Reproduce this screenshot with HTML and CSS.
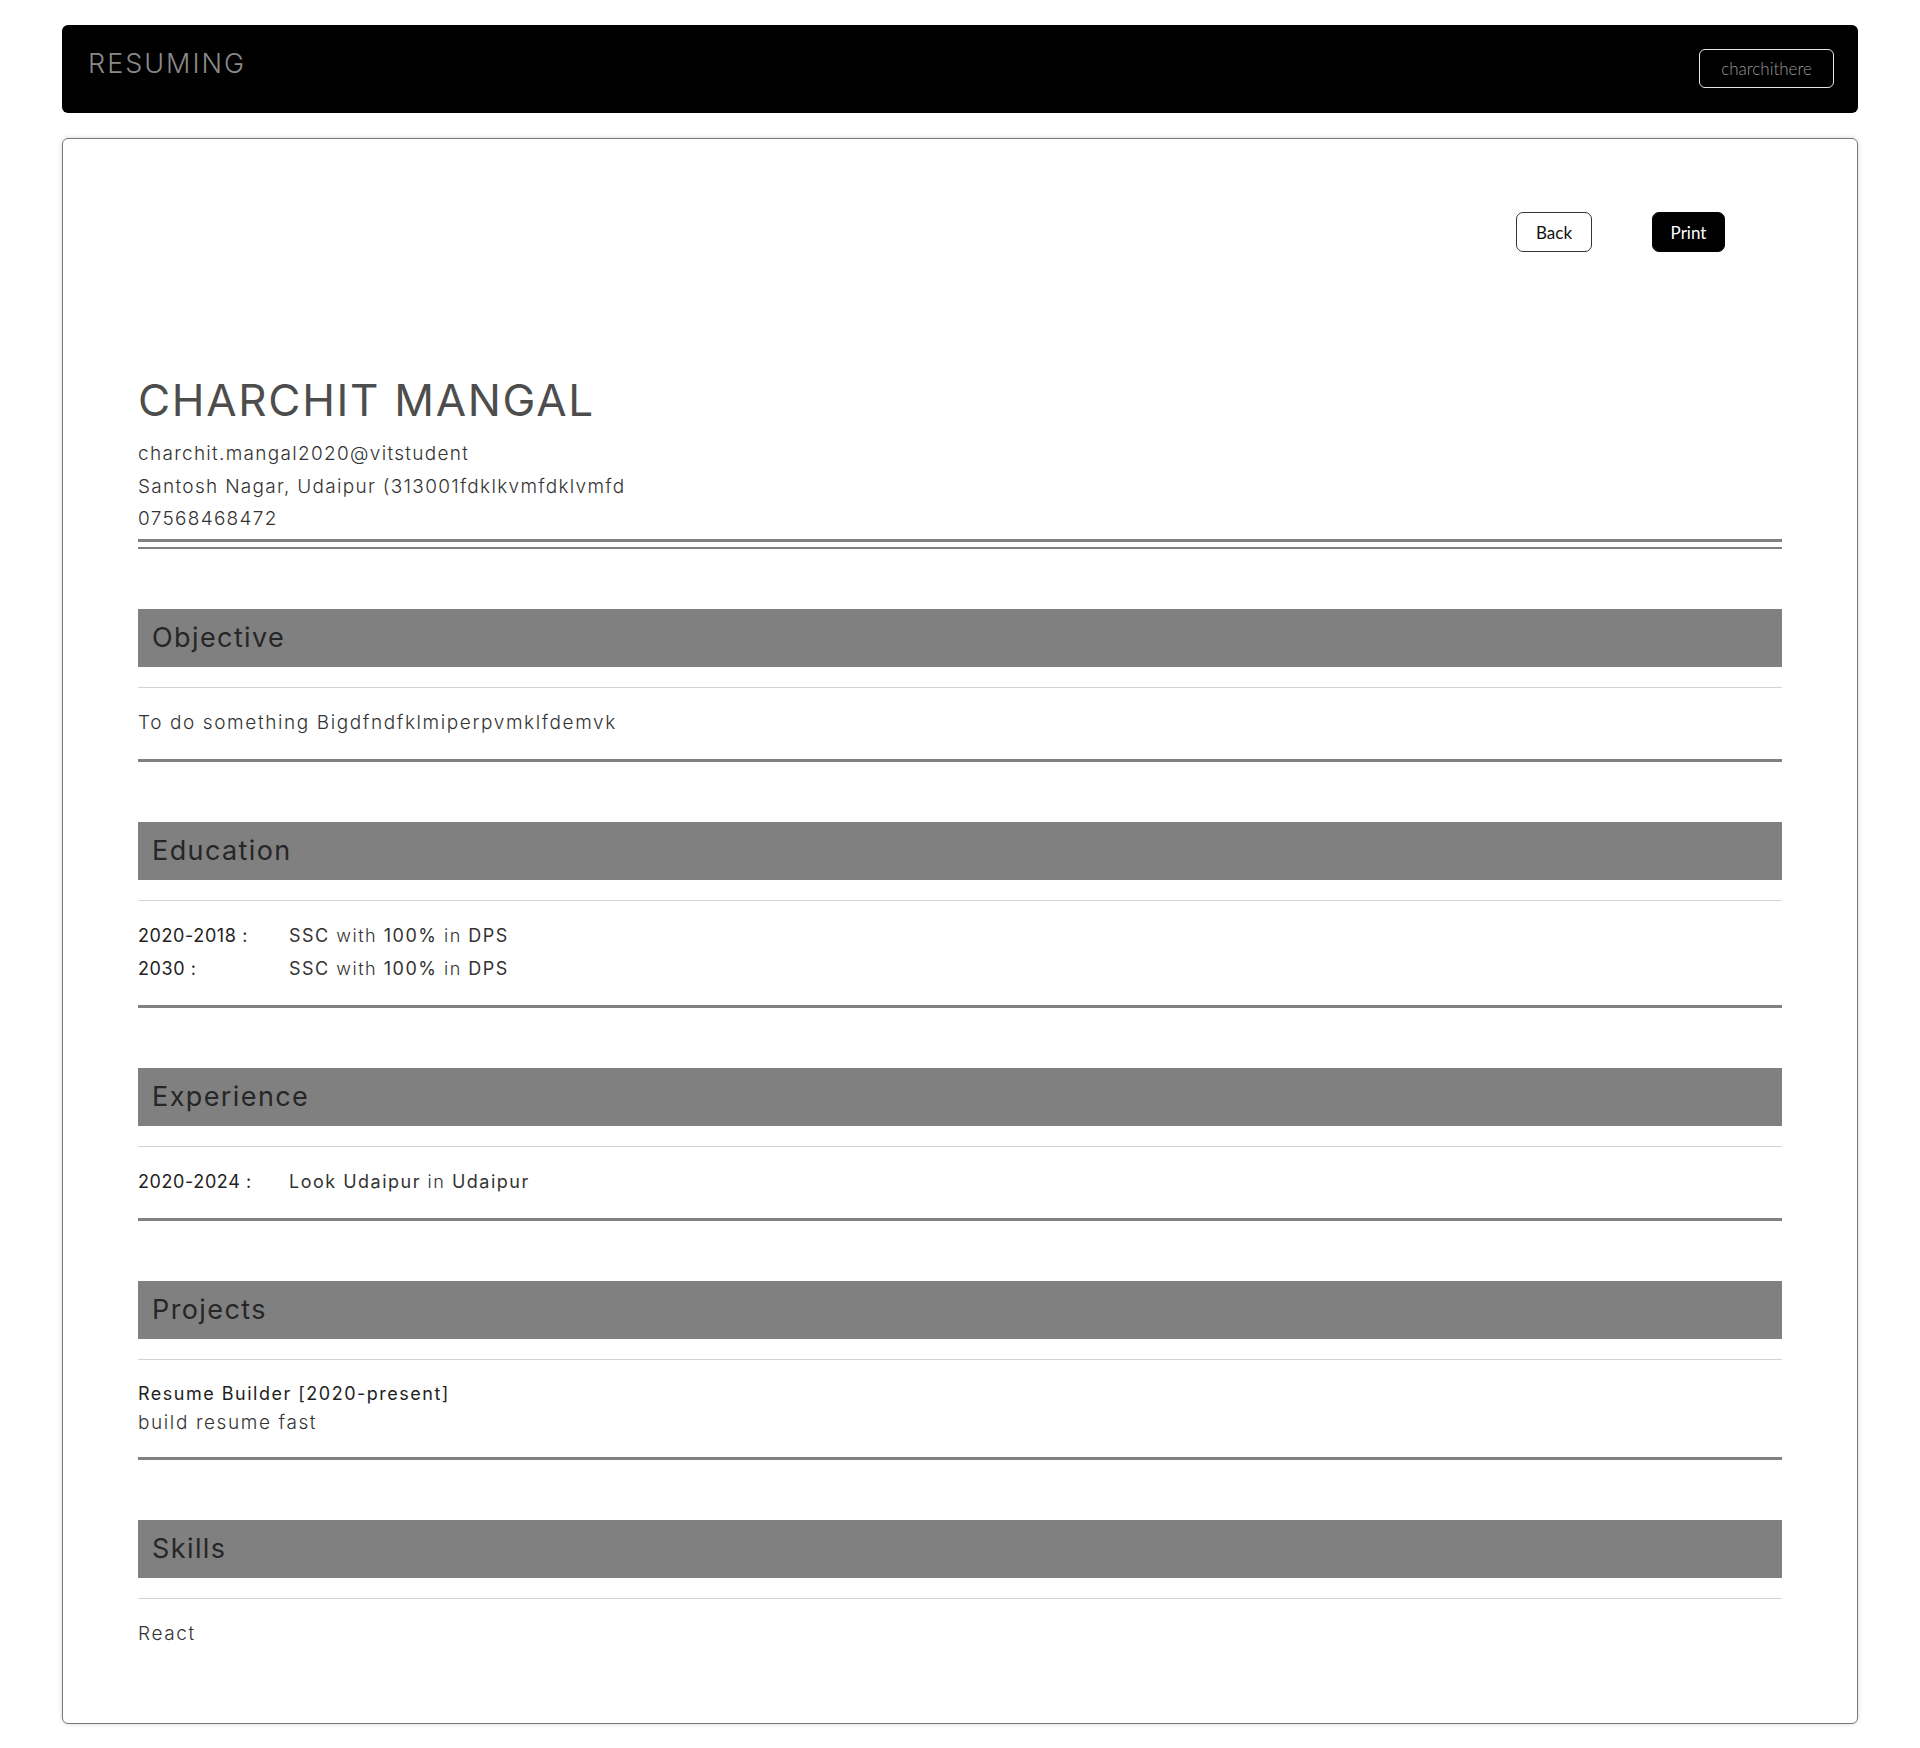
FILE: index.html
```html
<!DOCTYPE html>
<html lang="en">
<head>
<meta charset="utf-8">
<title>Resuming</title>
<link rel="stylesheet" href="styles.css">
</head>
<body>
<nav class="navbar">
  <div class="brand">RESUMING</div>
  <button class="user-btn">charchithere</button>
</nav>
<main class="card">
  <div class="actions">
    <button class="btn btn-outline">Back</button>
    <button class="btn btn-dark">Print</button>
  </div>
  <header class="resume-head">
    <h1 class="name">CHARCHIT MANGAL</h1>
    <div class="contact">
      <div>charchit.mangal2020@vitstudent</div>
      <div>Santosh Nagar, Udaipur (313001fdklkvmfdklvmfd</div>
      <div>07568468472</div>
    </div>
    <div class="double-rule"></div>
  </header>

  <section class="section">
    <h2 class="sec-title">Objective</h2>
    <div class="sec-body">
      <p class="light">To do something Bigdfndfklmiperpvmklfdemvk</p>
    </div>
  </section>

  <section class="section">
    <h2 class="sec-title">Education</h2>
    <div class="sec-body">
      <div class="row"><span class="date">2020-2018 :</span><span class="desc">SSC <span class="lt">with</span> 100% <span class="lt">in</span> DPS</span></div>
      <div class="row"><span class="date">2030 :</span><span class="desc">SSC <span class="lt">with</span> 100% <span class="lt">in</span> DPS</span></div>
    </div>
  </section>

  <section class="section">
    <h2 class="sec-title">Experience</h2>
    <div class="sec-body">
      <div class="row"><span class="date">2020-2024 :</span><span class="desc">Look Udaipur <span class="lt">in</span> Udaipur</span></div>
    </div>
  </section>

  <section class="section">
    <h2 class="sec-title">Projects</h2>
    <div class="sec-body proj">
      <div class="proj-title">Resume Builder [2020-present]</div>
      <div class="light">build resume fast</div>
    </div>
  </section>

  <section class="section last">
    <h2 class="sec-title">Skills</h2>
    <div class="sec-body">
      <p class="light">React</p>
    </div>
  </section>
</main>
</body>
</html>
```

FILE: styles.css
```css
* { box-sizing: border-box; }
html, body { margin: 0; padding: 0; background: #fff; }
body {
  padding: 25px 62px 24px;
  font-family: Inter, "DejaVu Sans", sans-serif;
  color: #444;
}
.navbar {
  height: 88px;
  background: #000;
  border-radius: 6px;
  display: flex;
  align-items: flex-start;
  justify-content: space-between;
  padding: 0 24px 0 26px;
}
.brand {
  margin-top: 23px;
  font-size: 27px;
  font-weight: 300;
  color: #8a8a8a;
  letter-spacing: 2px;
  line-height: 32px;
}
.user-btn {
  margin-top: 24px;
  width: 135px;
  height: 39px;
  background: transparent;
  border: 1px solid #e6e6e6;
  border-radius: 6px;
  color: #999;
  font-family: Lato, "Open Sans", sans-serif;
  font-weight: 300;
  font-size: 17px;
  padding: 0;
}
.card {
  margin-top: 25px;
  border: 1px solid #7a7a7a;
  border-radius: 6px;
  box-shadow: 0 0 4px rgba(0,0,0,0.18);
  padding: 73px 75px 73px 75px;
}
.actions {
  display: flex;
  justify-content: flex-end;
  gap: 60px;
  padding-right: 57px;
}
.btn {
  height: 40px;
  border-radius: 7px;
  font-family: Lato, "Open Sans", sans-serif;
  font-size: 17px;
  font-weight: 400;
  padding: 0;
}
.btn-outline { width: 76px; background: #fff; border: 1px solid #333; color: #111; }
.btn-dark { width: 73px; background: #000; border: 1px solid #000; color: #fff; }
.resume-head { margin-top: 121px; }
.name {
  margin: 0;
  font-size: 44px;
  font-weight: 400;
  line-height: 54px;
  color: #4d4d4d;
  letter-spacing: 1.7px;
}
.contact {
  margin-top: 11px;
  font-size: 19px;
  font-weight: 300;
  line-height: 32.5px;
  color: #333;
  letter-spacing: 1.3px;
}
.double-rule {
  margin-top: 3px;
  height: 10px;
  border-top: 3px solid #808080;
  border-bottom: 2px solid #808080;
}
.section {
  margin-top: 60px;
  border-bottom: 3px solid #808080;
}
.section.last { border-bottom: 0; }
.sec-title {
  margin: 0;
  height: 58px;
  background: #808080;
  padding-left: 14px;
  font-size: 27px;
  font-weight: 400;
  line-height: 58px;
  color: #262626;
  letter-spacing: 1.4px;
}
.sec-body {
  margin-top: 20px;
  border-top: 1px solid #d3d3d3;
  padding: 18px 0 20px;
  font-size: 18px;
  line-height: 33px;
  color: #333;
  letter-spacing: 1.4px;
}
.last .sec-body { padding-bottom: 0; }
.sec-body p { margin: 0; }
.light { font-weight: 300; color: #333; font-size: 19px; letter-spacing: 1.6px; }
.row { display: flex; }
.date { width: 151px; flex: none; color: #222; font-weight: 400; letter-spacing: 0.6px; }
.desc { color: #333; font-weight: 400; letter-spacing: 1.5px; }
.lt { font-weight: 300; }
.proj { line-height: 29px; padding-top: 19px; }
.proj-title { font-weight: 400; color: #222; letter-spacing: 1.5px; }
```
